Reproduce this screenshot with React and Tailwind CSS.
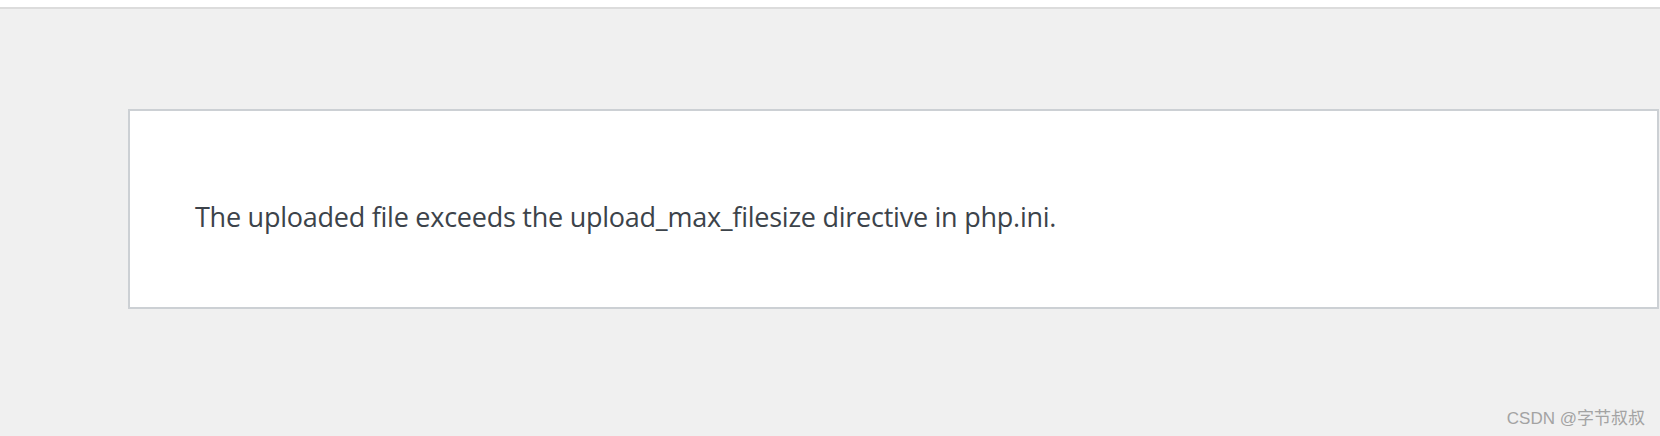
export default function App() {
  return (
    <div className="w-[1660px] h-[436px] overflow-hidden bg-[#f0f0f0] flex flex-col" style={{ fontFamily: '"Open Sans", "Noto Sans", sans-serif' }}>
      <div className="h-[7px] bg-white shrink-0" />
      <div className="h-[2px] bg-[#dcdcdc] shrink-0" />
      <div className="flex-1 flex flex-col pl-[128px] pt-[100px] pr-[1px]">
        <div className="h-[200px] bg-white border-2 border-[#ccd0d4] pl-[65px] pt-[88px]">
          <p className="text-[27px] leading-[36px] tracking-[-0.25px] text-[#3c434a]">
            The uploaded file exceeds the upload_max_filesize directive in php.ini.
          </p>
        </div>
        <div className="flex-1 flex items-end justify-end pr-[14px] pb-[7px]">
          <span className="text-[17px] leading-[20px] text-[#a3a3a3]" style={{ fontFamily: '"Liberation Sans", "Noto Sans CJK SC", sans-serif' }}>
            CSDN @字节叔叔
          </span>
        </div>
      </div>
    </div>
  );
}
